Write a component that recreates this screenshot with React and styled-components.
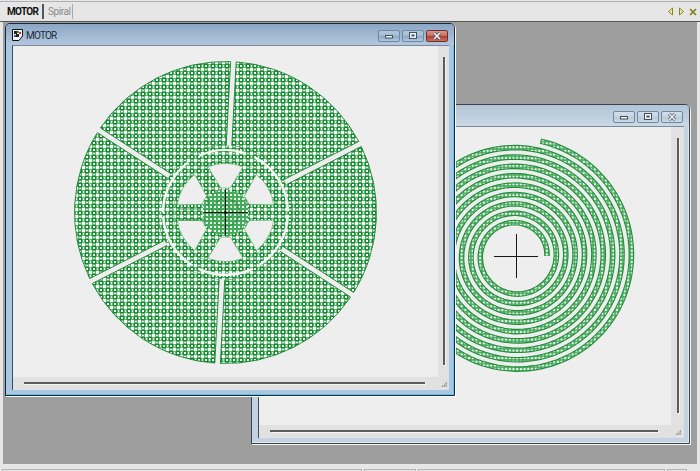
import React from "react";
import styled, { createGlobalStyle } from "styled-components";

const GlobalStyle = createGlobalStyle`
  html, body { margin: 0; padding: 0; background: #e6e6e6; overflow: hidden; }
  body { font-family: Roboto, "Liberation Sans", Arial, sans-serif; }
`;

const Page = styled.div`
  width: 700px;
  height: 471px;
  display: flex;
  flex-direction: column;
  overflow: hidden;
  background: #e6e6e6;
`;

const TabBar = styled.div`
  height: 19px;
  margin-top: 1px;
  border-top: 1px solid #b0b0b0;
  border-bottom: 1px solid #555;
  display: flex;
  align-items: center;
  padding-left: 7px;
  font-size: 10px;
  flex-shrink: 0;
`;

const Tab = styled.div`
  display: flex;
  align-items: center;
  height: 15px;
  width: ${(p) => (p.$active ? "35px" : "24px")};
  margin-right: ${(p) => (p.$active ? "4px" : "0")};
  letter-spacing: ${(p) => (p.$active ? "-0.7px" : "-0.4px")};
  color: ${(p) => (p.$active ? "#111" : "#8b8b8b")};
  font-weight: ${(p) => (p.$active ? "bold" : "normal")};
  border-right: ${(p) => (p.$active ? "2px solid #555" : "1px solid #aaa")};
`;

const TabTools = styled.div`
  margin-left: auto;
  margin-right: 3px;
  display: flex;
  gap: 4px;
  align-items: center;
`;

const Desktop = styled.div`
  position: relative;
  flex: 1;
  margin: 0 3px;
  background: #9e9e9e;
  overflow: hidden;
`;

const StatusBar = styled.div`
  height: 7px;
  box-sizing: border-box;
  display: flex;
  gap: 2px;
  padding: 5px 13px 0 2px;
  flex-shrink: 0;
`;

const StatusCell = styled.div`
  box-sizing: border-box;
  width: ${(p) => (p.$w ? p.$w + "px" : "auto")};
  flex: ${(p) => (p.$w ? "none" : 1)};
  border: 1px solid #b4b4b4;
  border-bottom: none;
`;

const Win = styled.div`
  position: absolute;
  left: ${(p) => p.$x - 3}px;
  top: ${(p) => p.$y - 22}px;
  width: ${(p) => p.$w}px;
  height: ${(p) => p.$h}px;
  box-sizing: border-box;
  display: flex;
  flex-direction: column;
  border: 1px solid ${(p) => (p.$active ? "#16283a" : "#3c4248")};
  border-radius: 5px 5px 0 0;
  padding: 0 5px 5px 6px;
  background: ${(p) => (p.$active ? "#a9c6e2" : "#c3d2e1")};
  box-shadow: ${(p) =>
    p.$active
      ? "inset -1px 0 0 #5fc4ea, inset 0 -1px 0 #5fc4ea, 1px 1px 0 #fff"
      : "inset -1px 0 0 #dfe8f0, inset 0 -1px 0 #dfe8f0, 1px 1px 0 #f4f4f4"};
`;

const TitleBar = styled.div`
  height: 21px;
  margin: 0 -5px 0 -6px;
  padding: 0 6px 0 6px;
  flex-shrink: 0;
  display: flex;
  align-items: center;
  gap: 3px;
  border-radius: 4px 4px 0 0;
  background: ${(p) =>
    p.$active
      ? "linear-gradient(#8ba6c5, #b3c8df)"
      : "linear-gradient(#b2c4d6, #cbd8e5)"};
`;

const TitleText = styled.span`
  font-size: 10px;
  letter-spacing: -0.8px;
  color: #1d2a36;
  position: relative;
  top: 1px;
`;

const Buttons = styled.div`
  margin-left: auto;
  display: flex;
  gap: 2px;
  margin-top: 2px;
`;

const CapButton = styled.div`
  width: 22px;
  height: 12px;
  box-sizing: border-box;
  display: flex;
  align-items: center;
  justify-content: center;
  border: 1px solid ${(p) => (p.$close ? "#6e2f2a" : "#6f88a3")};
  border-radius: 2px;
  background: ${(p) =>
    p.$close
      ? "linear-gradient(#d99a8e 0%, #c76f60 45%, #b43f30 55%, #c9705f 100%)"
      : p.$active
      ? "linear-gradient(#b4c8dc 0%, #a4bbd3 45%, #8ea9c6 55%, #b2c7dc 100%)"
      : "linear-gradient(#d3dee9 0%, #c6d4e2 45%, #b9cad9 55%, #ccd9e6 100%)"};
`;

const Client = styled.div`
  flex: 1;
  min-height: 0;
  display: grid;
  grid-template-columns: 1fr ${(p) => p.$gutter}px;
  grid-template-rows: 1fr 13px;
  background: #e1e1e1;
  border-top: 1px solid #7d8a96;
  border-left: 1px solid #3f4a55;
`;

const Viewport = styled.div`
  background: #eeeeee;
  overflow: hidden;
  min-height: 0;
  svg { display: block; }
`;

const VBar = styled.div`
  display: flex;
  justify-content: center;
  padding: 11px 0 12px;
`;

const HBar = styled.div`
  display: flex;
  align-items: center;
  padding: 0 13px 1px 11px;
`;

const Track = styled.div`
  background: #5c5c5c;
  flex: 1;
  ${(p) => (p.$vertical ? "width: 2px; flex: none;" : "height: 2px;")}
  box-shadow: 1px 1px 0 #f6f6f6;
`;

const Grip = styled.div`
  display: flex;
  align-items: flex-end;
  justify-content: center;
  padding-bottom: 2px;
`;

const polar = (cx, cy, r, deg) => {
  const a = (deg * Math.PI) / 180;
  return [cx + r * Math.cos(a), cy - r * Math.sin(a)];
};

const pt = (p) => `${p[0].toFixed(2)} ${p[1].toFixed(2)}`;

// annular sector (clockwise from a1 to a2) with a constant-width gap along its radial edges
const sectorPath = (cx, cy, r1, r2, a1, a2, gap) => {
  const off = (r) => (Math.asin(gap / r) * 180) / Math.PI;
  const p1 = polar(cx, cy, r2, a1 - off(r2));
  const p2 = polar(cx, cy, r2, a2 + off(r2));
  const p3 = polar(cx, cy, r1, a2 + off(r1));
  const p4 = polar(cx, cy, r1, a1 - off(r1));
  return `M${pt(p1)}A${r2} ${r2} 0 0 1 ${pt(p2)}L${pt(p3)}A${r1} ${r1} 0 0 0 ${pt(p4)}Z`;
};

const arcPath = (cx, cy, r, a1, a2) =>
  `M${pt(polar(cx, cy, r, a1))}A${r} ${r} 0 0 1 ${pt(polar(cx, cy, r, a2))}`;

// spoke holes of the hub, wide at the rim and narrow near the centre
const holePath = (cx, cy, a) => {
  const o1 = polar(cx, cy, 49, a - 21);
  const o2 = polar(cx, cy, 49, a + 21);
  const i2 = polar(cx, cy, 25, a + 11);
  const i1 = polar(cx, cy, 25, a - 11);
  return `M${pt(o1)}A49 49 0 0 0 ${pt(o2)}L${pt(i2)}L${pt(i1)}Z`;
};

const Hatch = ({ id }) => (
  <pattern id={id} width="7" height="7" patternUnits="userSpaceOnUse">
    <rect width="7" height="7" fill="#5fb171" />
    <rect x="0" y="0" width="4" height="4" fill="#0f8f2b" />
    <rect x="1" y="1" width="2" height="2" fill="#ffffff" />
    <rect x="4" y="4" width="3" height="3" fill="#ffffff" />
    <rect x="5" y="1" width="1" height="2" fill="#e2f2e5" />
    <rect x="1" y="5" width="2" height="1" fill="#e2f2e5" />
  </pattern>
);

const Motor = () => {
  const cx = 224.5;
  const cy = 211.5;
  const spokes = [87, 27, -33, -93, -153, -213];
  const rings = [[72, 115], [127, 180], [1, 62], [184, 238], [244, 296], [302, 358]];
  return (
    <svg width="426" height="333" viewBox="12 45 426 333">
      <defs>
        <Hatch id="motorHatch" />
        <pattern id="hubHatch" width="4" height="4" patternUnits="userSpaceOnUse">
          <rect width="4" height="4" fill="#45aa5b" />
          <rect x="1" y="1" width="2" height="2" fill="#e8f6eb" />
        </pattern>
      </defs>
      {spokes.map((a, i) => (
        <path
          key={i}
          d={sectorPath(cx, cy, 67, 151, a, a - 60, 2.8)}
          fill="url(#motorHatch)"
          stroke="#1c7f33"
          strokeWidth="0.9"
        />
      ))}
      <circle cx={cx} cy={cy} r="67" fill="url(#motorHatch)" />
      {rings.map(([a, b], i) => (
        <path key={i} d={arcPath(cx, cy, 62.5, b, a)} fill="none" stroke="#f4f4f4" strokeWidth="2.4" />
      ))}
      <circle cx={cx} cy={cy} r="52" fill="none" stroke="#2b8a41" strokeWidth="0.8" opacity="0.6" />
      {[90, 30, -30, -90, -150, 150].map((a) => (
        <path key={a} d={holePath(cx, cy, a)} fill="#eeeeee" stroke="#5aa96c" strokeWidth="0.6" />
      ))}
      <circle cx={cx} cy={cy} r="23" fill="url(#hubHatch)" />
      <circle cx={cx} cy={cy} r="14" fill="none" stroke="#1c7f33" strokeWidth="0.7" />
      <circle cx={cx} cy={cy} r="7" fill="none" stroke="#1c7f33" strokeWidth="0.7" />
      <path d="M207 168V205M177 208H200M177 219H203" fill="none" stroke="#1c7f33" strokeWidth="0.8" />
      <path d={`M${cx - 22} ${cy}H${cx + 22}M${cx} ${cy - 23}V${cy + 23}`} stroke="#161616" strokeWidth="1" />
      <circle cx={cx} cy={cy} r="1.6" fill="#111" />
    </svg>
  );
};

const spiralPoints = () => {
  const cx = 515;
  const cy = 255;
  const pts = [];
  const end = 9 * 360 + 78;
  for (let d = 0; d <= end; d += 3) {
    const r = 31 + (9.38 * d) / 360;
    pts.push(polar(cx, cy, r, d).map((v) => v.toFixed(1)).join(","));
  }
  return pts.join(" ");
};

const Spiral = () => {
  const points = spiralPoints();
  return (
    <svg width="414" height="299" viewBox="258 126 414 299">
      <defs>
        <pattern id="spiralHatch" width="3.7" height="3.7" patternUnits="userSpaceOnUse">
          <rect width="3.7" height="3.7" fill="#4aa85f" />
          <rect x=".8" y=".8" width="2.1" height="2.1" fill="#f4fbf5" />
        </pattern>
      </defs>
      <polyline points={points} fill="none" stroke="#1f8f38" strokeWidth="5.6" />
      <polyline points={points} fill="none" stroke="url(#spiralHatch)" strokeWidth="3.4" />
      <path d="M493 255.5H537M515.5 233V277" stroke="#161616" strokeWidth="1" />
    </svg>
  );
};

const AppIcon = () => (
  <svg width="11" height="12" viewBox="0 0 11 12" style={{ flexShrink: 0 }}>
    <path d="M.5.5H10.5V7L7 11.5H.5Z" fill="#f4f4f4" stroke="#111" />
    <path d="M2 2h3v3H2zM4 5h3v3H4z" fill="#222" />
    <path d="M5 2h2v2H5z" fill="#2a9a3a" />
    <path d="M7 3h2v2H7z" fill="#c03030" />
    <path d="M2 6h2v2H2z" fill="#2f55c0" />
  </svg>
);

const CapIcon = ({ kind }) => {
  if (kind === "min")
    return (
      <svg width="10" height="6" viewBox="0 0 10 6">
        <rect x="1.5" y="2.5" width="7" height="2.5" fill="#eef3f8" stroke="#44505c" strokeWidth="1" />
      </svg>
    );
  if (kind === "max")
    return (
      <svg width="10" height="8" viewBox="0 0 10 8">
        <rect x="1.5" y=".5" width="7" height="6" fill="#eef3f8" stroke="#44505c" strokeWidth="1" />
        <rect x="3.5" y="2.5" width="3" height="2" fill="#44505c" />
      </svg>
    );
  return (
    <svg width="10" height="8" viewBox="0 0 10 8">
      <path d="M2 1L8 7M8 1L2 7" stroke="#44505c" strokeWidth="3" />
      <path d="M2 1L8 7M8 1L2 7" stroke="#f4f4f4" strokeWidth="1.6" />
    </svg>
  );
};

const GripIcon = () => (
  <svg width="8" height="8" viewBox="0 0 8 8">
    <path d="M7 1V7H1Z" fill="#c2c2c2" />
    <path d="M6 3h1v1H6zM4 5h1v1H4zM6 5h1v1H6zM2 6h1v1H2zM4 6.5h1v.5H4z" fill="#8e8e8e" />
  </svg>
);

const MdiWindow = ({ x, y, w, h, title, active, gutter, children }) => (
  <Win $x={x} $y={y} $w={w} $h={h} $active={active}>
    <TitleBar $active={active}>
      {title && <AppIcon />}
      {title && <TitleText>{title}</TitleText>}
      <Buttons>
        <CapButton $active={active}><CapIcon kind="min" /></CapButton>
        <CapButton $active={active}><CapIcon kind="max" /></CapButton>
        <CapButton $active={active} $close={active}><CapIcon kind="close" /></CapButton>
      </Buttons>
    </TitleBar>
    <Client $gutter={gutter}>
      <Viewport>{children}</Viewport>
      <VBar><Track $vertical /></VBar>
      <HBar><Track /></HBar>
      <Grip><GripIcon /></Grip>
    </Client>
  </Win>
);

const App = () => (
  <>
    <GlobalStyle />
    <Page>
      <TabBar>
        <Tab $active>MOTOR</Tab>
        <Tab>Spiral</Tab>
        <TabTools>
          <svg width="7" height="9" viewBox="0 0 7 9"><path d="M5.5 1V8L1.5 4.5Z" fill="#e8e8b0" stroke="#85851a" /></svg>
          <svg width="7" height="9" viewBox="0 0 7 9"><path d="M1.5 1V8L5.5 4.5Z" fill="#e8e8b0" stroke="#85851a" /></svg>
          <svg width="8" height="8" viewBox="0 0 8 8"><path d="M1 1L7 7M7 1L1 7" stroke="#7d7d10" strokeWidth="1.6" /></svg>
        </TabTools>
      </TabBar>
      <Desktop>
        <MdiWindow x={251} y={104} w={439} h={340} gutter={13}>
          <Spiral />
        </MdiWindow>
        <MdiWindow x={5} y={23} w={450} h={373} title="MOTOR" active gutter={11}>
          <Motor />
        </MdiWindow>
      </Desktop>
      <StatusBar>
        <StatusCell />
        <StatusCell $w={52} />
        <StatusCell $w={247} />
        <StatusCell $w={20} />
      </StatusBar>
    </Page>
  </>
);

export default App;
